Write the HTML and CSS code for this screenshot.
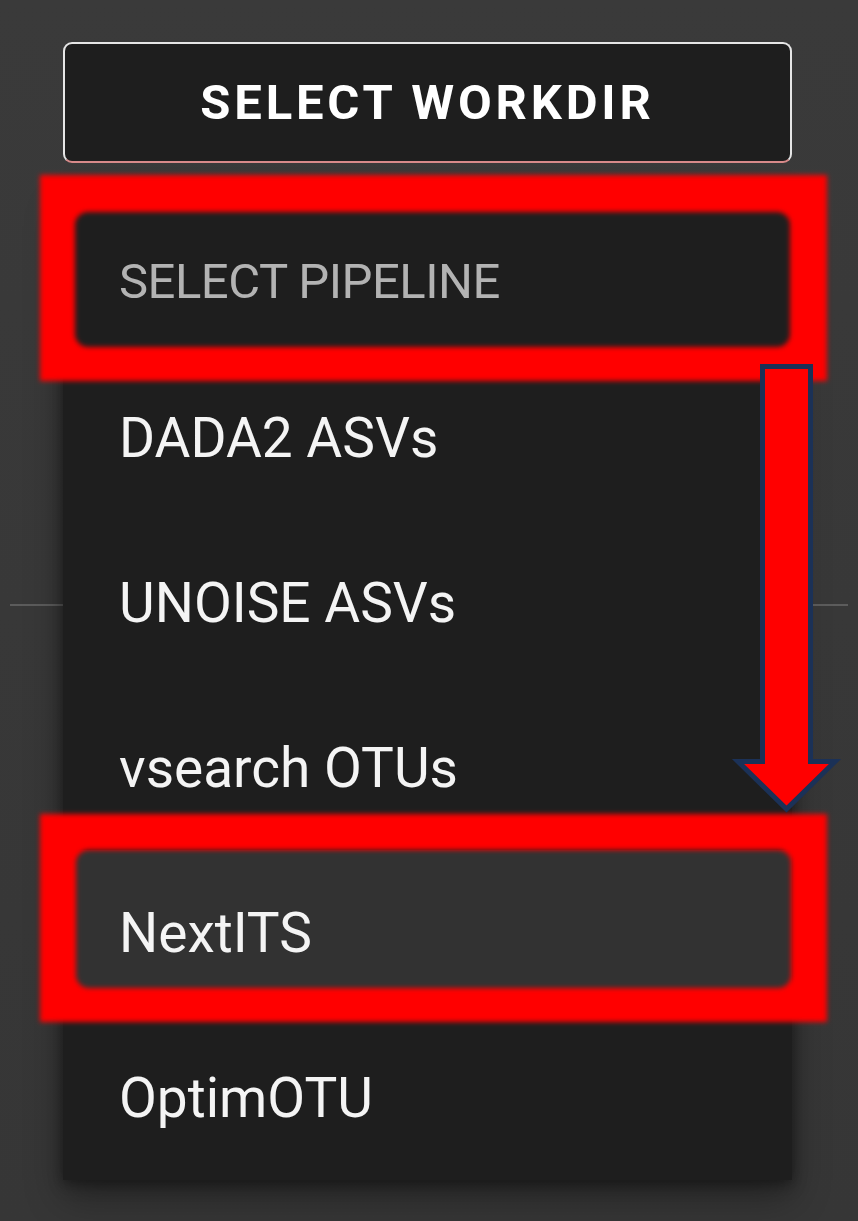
FILE: index.html
```html
<!DOCTYPE html>
<html lang="en">
<head>
<meta charset="utf-8">
<title>Select pipeline</title>
<link rel="stylesheet" href="styles.css">
</head>
<body>
<div class="page">
  <button class="workdir-btn" type="button">SELECT WORKDIR</button>
  <div class="divider"></div>
</div>

<ul class="menu">
  <li class="menu-item placeholder">SELECT PIPELINE</li>
  <li class="menu-item">DADA2 ASVs</li>
  <li class="menu-item">UNOISE ASVs</li>
  <li class="menu-item">vsearch OTUs</li>
  <li class="menu-item hovered">NextITS</li>
  <li class="menu-item">OptimOTU</li>
</ul>

<svg class="annotations" width="858" height="1221" viewBox="0 0 858 1221" xmlns="http://www.w3.org/2000/svg">
  <defs>
    <filter id="soft" x="-5%" y="-20%" width="110%" height="140%">
      <feGaussianBlur stdDeviation="2.6"/>
    </filter>
  </defs>
  <path filter="url(#soft)" fill="#ff0000" fill-rule="evenodd"
    d="M40 175H827V381H40Z M88 212H777A13 13 0 0 1 790 225V334A13 13 0 0 1 777 347H88A13 13 0 0 1 75 334V225A13 13 0 0 1 88 212Z"/>
  <path filter="url(#soft)" fill="#ff0000" fill-rule="evenodd"
    d="M40 814H827V1022H40Z M89 850H778A13 13 0 0 1 791 863V975A13 13 0 0 1 778 988H89A13 13 0 0 1 76 975V863A13 13 0 0 1 89 850Z"/>
  <polygon points="762.5,366.5 810.5,366.5 810.5,761.5 835,761.5 786.5,809 738,761.5 762.5,761.5"
    fill="#ff0000" stroke="#1b3157" stroke-width="5" stroke-linejoin="miter"/>
</svg>
</body>
</html>
```

FILE: styles.css
```css
html, body {
  margin: 0;
  padding: 0;
}

body {
  width: 858px;
  height: 1221px;
  background: linear-gradient(#3a3a3a, #363636);
  font-family: Roboto, "Liberation Sans", Arial, sans-serif;
  position: relative;
  overflow: hidden;
}

.page {
  padding: 42px 10px 0 10px;
  display: flex;
  flex-direction: column;
}

.workdir-btn {
  margin: 0 56px 0 53px;
  height: 121px;
  background: #1e1e1e;
  border: 2px solid #e6e6e6;
  border-bottom-color: #d88a8a;
  border-radius: 9px;
  color: #ffffff;
  font-family: Roboto, "Liberation Sans", Arial, sans-serif;
  font-weight: 700;
  font-size: 49px;
  letter-spacing: 3.8px;
  padding: 0;
  display: flex;
  align-items: center;
  justify-content: center;
}

.divider {
  margin-top: 441px;
  height: 2px;
  background: #5c5c5c;
}

.menu {
  position: absolute;
  top: 190px;
  left: 63px;
  width: 729px;
  margin: 0;
  padding: 10px 0 0 0;
  list-style: none;
  background: #1e1e1e;
  box-shadow: 0 18px 36px rgba(0, 0, 0, 0.32), 0 6px 14px rgba(0, 0, 0, 0.28), 0 0 10px rgba(0, 0, 0, 0.2);
}

.menu-item {
  height: 165px;
  padding: 0 56px;
  display: flex;
  align-items: center;
  color: #f4f4f4;
  font-size: 55px;
  white-space: nowrap;
}

.menu-item.placeholder {
  height: 155px;
  padding-top: 8px;
  box-sizing: border-box;
  color: #b3b3b3;
  font-size: 49px;
  letter-spacing: -0.5px;
}

.menu-item.hovered {
  background: #323232;
}

.annotations {
  position: absolute;
  top: 0;
  left: 0;
  pointer-events: none;
}
```
